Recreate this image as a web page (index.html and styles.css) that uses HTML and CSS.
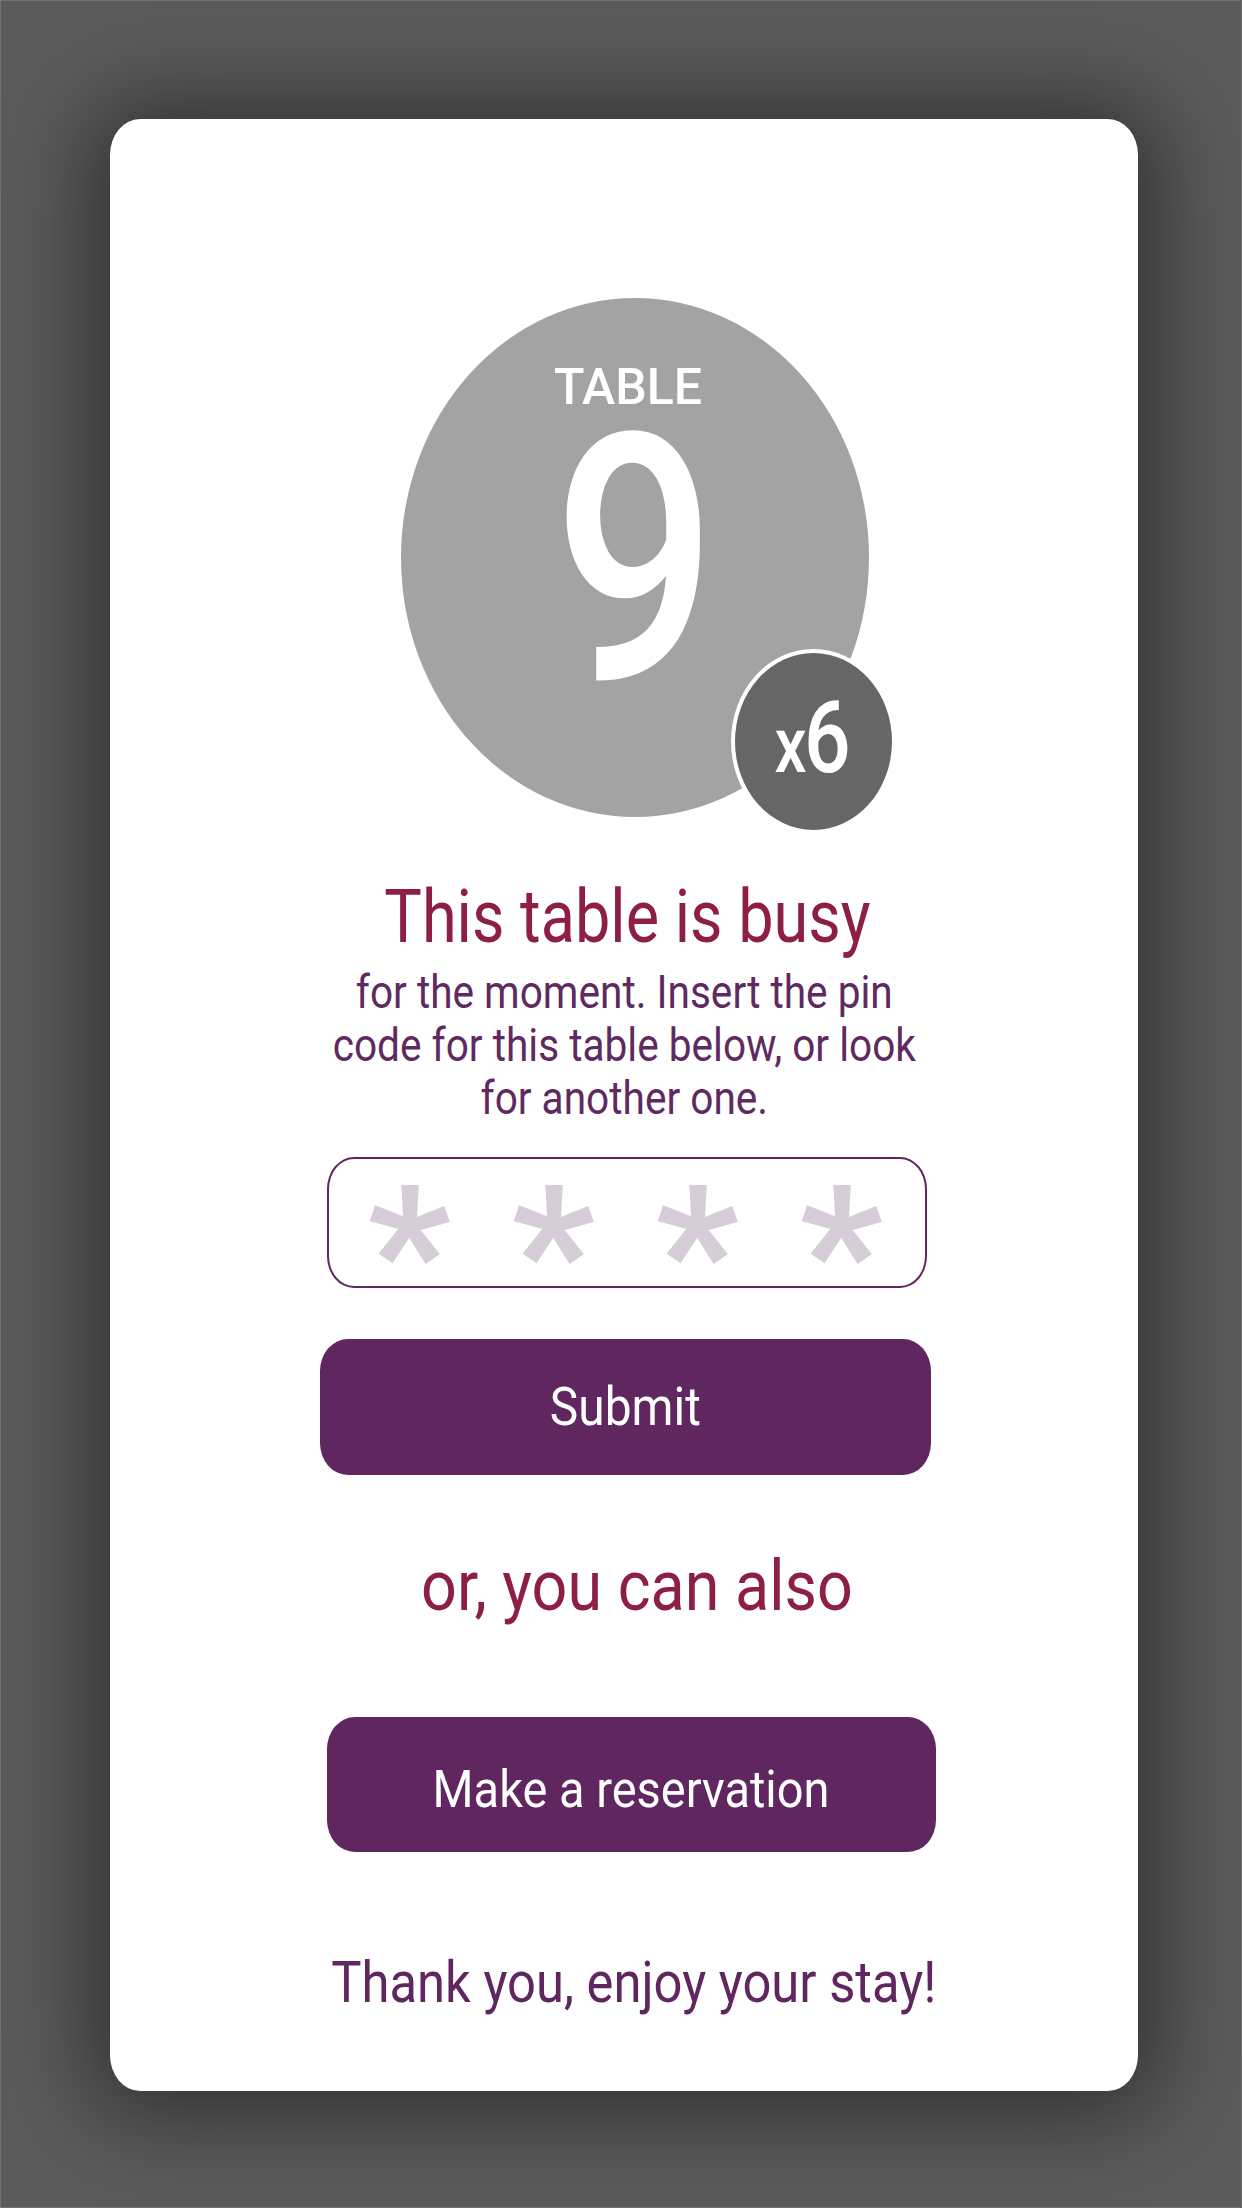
FILE: index.html
```html
<!DOCTYPE html>
<html lang="en">
<head>
<meta charset="utf-8">
<title>Table busy</title>
<link rel="stylesheet" href="styles.css">
</head>
<body>
<div class="screen">
  <main class="card">
    <div class="table-disc">
      <div class="table-label">TABLE</div>
      <div class="table-num"><span class="sq">9</span></div>
      <div class="seats"><span class="sq"><span class="seats-x">x</span><span class="seats-n">6</span></span></div>
    </div>
    <h1 class="title"><span class="sq">This table is busy</span></h1>
    <p class="lead"><span class="sq">for the moment. Insert the pin<br>code for this table below, or look<br>for another one.</span></p>
    <div class="pin">
      <span class="pin-dot">*</span>
      <span class="pin-dot">*</span>
      <span class="pin-dot">*</span>
      <span class="pin-dot">*</span>
    </div>
    <button class="btn btn-submit"><span class="sq">Submit</span></button>
    <p class="alt"><span class="sq">or, you can also</span></p>
    <button class="btn btn-reserve"><span class="sq">Make a reservation</span></button>
    <p class="thanks"><span class="sq">Thank you, enjoy your stay!</span></p>
  </main>
</div>
</body>
</html>
```

FILE: styles.css
```css
* { box-sizing: border-box; }

html, body {
  margin: 0;
  padding: 0;
  background: #5b5b5b;
}

body {
  font-family: Roboto, "Liberation Sans", sans-serif;
  font-weight: 400;
}

.screen {
  width: 1242px;
  height: 2208px;
  background: #5b5b5b;
  border: 1px solid #727272;
  padding: 118px 0 0 109px;
  display: flex;
  align-items: flex-start;
  overflow: hidden;
}

.card {
  width: 1028px;
  height: 1972px;
  background: #ffffff;
  border-radius: 30px / 36px;
  box-shadow: 0 4px 90px 22px rgba(0, 0, 0, 0.46);
  display: flex;
  flex-direction: column;
  align-items: center;
}

.sq {
  display: inline-block;
  transform: scaleX(0.875);
  transform-origin: 50% 50%;
  white-space: nowrap;
}

/* table disc */
.table-disc {
  position: relative;
  width: 468px;
  height: 519px;
  margin-top: 179px;
  margin-left: 22px;
  border-radius: 50%;
  background: #a3a3a3;
  display: flex;
  flex-direction: column;
  align-items: center;
  padding-top: 64px;
  color: #ffffff;
}

.table-label {
  font-size: 50px;
  line-height: 50px;
  margin-right: 14px;
  font-weight: 500;
}

.table-num {
  font-size: 345px;
  line-height: 250px;
  margin-top: 24px;
  font-weight: 500;
}
.table-num .sq { transform: scaleX(0.83); }

.seats {
  position: absolute;
  left: 330px;
  top: 351px;
  width: 165px;
  height: 185px;
  border-radius: 50%;
  background: #666666;
  border: 4px solid #ffffff;
  text-align: center;
  padding-top: 35px;
  line-height: 98px;
  color: #ffffff;
  font-weight: 500;
}
.seats .sq { transform: scaleX(0.82); margin-left: -2px; }
.seats-x { font-size: 78px; line-height: 1; }
.seats-n { font-size: 100px; line-height: 1; margin-left: -3px; }

/* texts */
.title {
  margin: 59px 0 0 7px;
  font-size: 75px;
  line-height: 80px;
  font-weight: 400;
  color: #8d1f44;
  text-align: center;
}
.title .sq { transform: scaleX(0.84); }

.lead {
  margin: 10px 0 0 0;
  font-size: 46.4px;
  line-height: 53px;
  color: #5e2a5f;
  text-align: center;
}

.pin {
  margin: 32px 0 0 6px;
  width: 600px;
  height: 131px;
  border: 2px solid #5f2660;
  border-radius: 27px / 32px;
  display: flex;
  justify-content: center;
  align-items: flex-start;
  padding-right: 4px;
}

.pin-dot {
  width: 144px;
  text-align: center;
  font-size: 184px;
  font-weight: 700;
  line-height: 131px;
  height: 127px;
  color: #d6cdd8;
  padding-top: 29px;
  overflow: visible;
}

.btn {
  display: block;
  border: 0;
  padding: 0;
  background: #5f2660;
  color: #ffffff;
  font-family: Roboto, "Liberation Sans", sans-serif;
  text-align: center;
}

.btn-submit {
  margin: 51px 0 0 3px;
  width: 611px;
  height: 136px;
  border-radius: 28px / 32px;
  font-size: 53.5px;
  line-height: 136px;
}
.btn-submit .sq { transform: scaleX(0.895); }

.alt {
  margin: 71px 0 0 26px;
  font-size: 71px;
  line-height: 80px;
  color: #8d1f44;
  text-align: center;
}
.alt .sq { transform: scaleX(0.885); }

.btn-reserve {
  margin: 91px 0 0 15px;
  width: 609px;
  height: 135px;
  border-radius: 28px / 32px;
  font-size: 51.6px;
  line-height: 135px;
  padding-top: 5px;
}
.btn-reserve .sq { transform: scaleX(0.91); }

.thanks {
  margin: 98px 0 0 19px;
  font-size: 58px;
  line-height: 64px;
  color: #5f2660;
  text-align: center;
}
.thanks .sq { transform: scaleX(0.875); }
```
